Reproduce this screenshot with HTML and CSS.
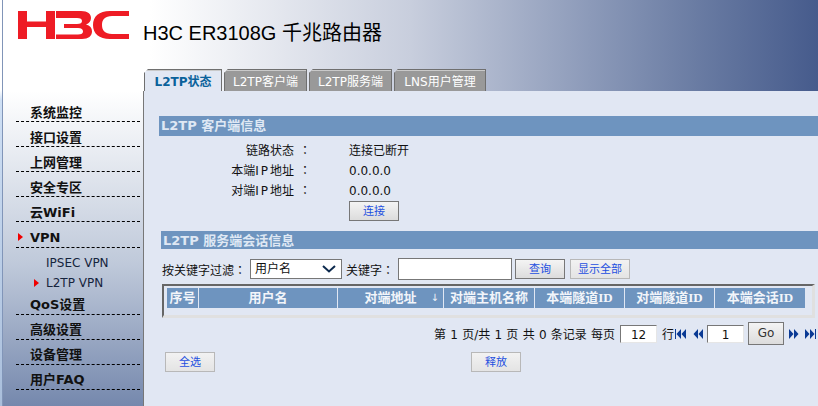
FILE: index.html
```html
<!DOCTYPE html>
<html lang="zh-CN">
<head>
<meta charset="utf-8">
<title>H3C ER3108G</title>
<link rel="stylesheet" href="styles.css">
</head>
<body>
<div class="page">
  <header class="header">
    <div class="brand">
      <svg class="logo" width="112" height="30" viewBox="0 0 112 30">
        <g fill="#ee1c25">
          <path d="M0 1h9v10.500h19V1h9v28h-9V17H9v12H0z"/>
          <path d="M38 1h25c7 0 10 3 10 7 0 3-2 5.500-5 6.500 4 1 6 3.500 6 7 0 4.500-3.500 7.500-10 7.500H38v-4.500h22c3.500 0 5-1 5-3 0-2.200-1.500-3.500-5-3.500H46v-4h13c3.500 0 5-1 5-3s-1.500-3-5-3H38z"/>
          <path d="M111 1v5H94c-7 0-10 3.500-10 9s3 9 10 9h17v5H92C81 29 75 23.500 75 15S81 1 92 1z"/>
        </g>
      </svg>
      <h1 class="title">H3C ER3108G 千兆路由器</h1>
    </div>
    <nav class="tabs">
      <a class="tab active">L2TP状态</a>
      <a class="tab">L2TP客户端</a>
      <a class="tab">L2TP服务端</a>
      <a class="tab wide">LNS用户管理</a>
    </nav>
  </header>
  <div class="body">
    <aside class="sidebar">
      <a class="item">系统监控</a>
      <a class="item">接口设置</a>
      <a class="item">上网管理</a>
      <a class="item">安全专区</a>
      <a class="item">云WiFi</a>
      <a class="item current">VPN</a>
      <div class="sub">
        <a class="subitem">IPSEC VPN</a>
        <a class="subitem current">L2TP VPN</a>
      </div>
      <a class="item after-sub">QoS设置</a>
      <a class="item">高级设置</a>
      <a class="item">设备管理</a>
      <a class="item">用户FAQ</a>
    </aside>
    <main class="main">
      <section class="client">
        <h2 class="bar">L2TP 客户端信息</h2>
        <dl class="info">
          <dt>链路状态<span class="colon" lang="zh-Hant">：</span></dt><dd>连接已断开</dd>
          <dt>本端<span class="latin">IP</span>地址<span class="colon" lang="zh-Hant">：</span></dt><dd>0.0.0.0</dd>
          <dt>对端<span class="latin">IP</span>地址<span class="colon" lang="zh-Hant">：</span></dt><dd>0.0.0.0</dd>
        </dl>
        <div class="connect"><button class="btn">连接</button></div>
      </section>
      <section class="server">
        <h2 class="bar slim">L2TP 服务端会话信息</h2>
        <div class="filter">
          <span>按关键字过滤<span class="colon" lang="zh-Hant">：</span></span>
          <span class="select">用户名
            <svg width="14" height="8" viewBox="0 0 14 8"><path d="M1 1l6 5.500L13 1" fill="none" stroke="#0d2a4e" stroke-width="2"/></svg>
          </span>
          <span>关键字<span class="colon" lang="zh-Hant">：</span></span>
          <span class="field keyword"></span>
          <button class="btn">查询</button>
          <button class="btn soft">显示全部</button>
        </div>
        <div class="table-box">
          <table class="table">
            <thead>
              <tr>
                <th class="c1">序号</th>
                <th class="c2">用户名</th>
                <th class="c3">对端地址<span class="sort">↓</span></th>
                <th class="c4">对端主机名称</th>
                <th class="c5">本端隧道ID</th>
                <th class="c5">对端隧道ID</th>
                <th class="c5">本端会话ID</th>
              </tr>
            </thead>
          </table>
        </div>
        <div class="pager">
          <span class="pager-text">第 1 页/共 1 页 共 0 条记录 每页</span>
          <span class="field small">12</span>
          <span class="rows">行</span>
          <svg class="pg first" width="12" height="10" viewBox="0 0 12 10"><path d="M0 0h1v10H0zM6 0v10L1.500 5zM11 0v10L6.500 5z" fill="#0a3a94"/></svg>
          <svg class="pg prev" width="10" height="10" viewBox="0 0 10 10"><path d="M5 0v10L.5 5zM10 0v10L5.500 5z" fill="#0a3a94"/></svg>
          <span class="field small page-no">1</span>
          <button class="btn go">Go</button>
          <svg class="pg next" width="10" height="10" viewBox="0 0 10 10"><path d="M0 0v10l4.500-5zM5 0v10l4.500-5z" fill="#0a3a94"/></svg>
          <svg class="pg last" width="12" height="10" viewBox="0 0 12 10"><path d="M0 0v10l4.500-5zM5 0v10l4.500-5zM10 0h1v10h-1z" fill="#0a3a94"/></svg>
        </div>
        <div class="actions">
          <button class="btn soft">全选</button>
          <button class="btn soft">释放</button>
        </div>
      </section>
    </main>
  </div>
</div>
</body>
</html>
```
FILE: styles.css
```css
* { box-sizing: border-box; }
html, body { margin: 0; height: 100%; overflow: hidden; }
body {
  width: 818px;
  height: 406px;
  background: linear-gradient(#ffffff 90px, #cfe0f5 100px, #a9bedb);
  font-family: "DejaVu Sans", "Noto Sans CJK SC", sans-serif;
  font-size: 12px;
  color: #111;
}
.page {
  margin-left: 2px;
  height: 406px;
  border-left: 1px solid #8195b8;
  display: flex;
  flex-direction: column;
}
.header {
  height: 91px;
  display: flex;
  flex-direction: column;
  background: linear-gradient(90deg, #fff 0, #fff 18%, #c8cedd 50%, #8c9ab9 72%, #6a7ca3 85%, #465b8c 100%);
}
.brand {
  height: 69px;
  display: flex;
  align-items: flex-start;
}
.logo { margin: 10px 0 0 15px; flex: none; }
.title {
  margin: 21px 0 0 13px;
  font: 400 20px/24px "Liberation Sans", "Noto Sans CJK SC", sans-serif;
  color: #000;
  white-space: nowrap;
}
.tabs {
  height: 22px;
  padding-left: 141px;
  display: flex;
  gap: 2px;
}
.tab {
  width: 83px;
  height: 22px;
  background: #999;
  border: 1px solid #6f6f6f;
  border-bottom: 0;
  box-shadow: inset 0 1px 0 #c9c9c9;
  clip-path: polygon(4px 0, 100% 0, 100% 100%, 0 100%, 0 4px);
  color: #fff;
  font-size: 12px;
  line-height: 24px;
  text-align: center;
  white-space: nowrap;
}
.tab.active {
  width: 78px;
  background: #e1e7f3;
  color: #0a629b;
  font-weight: 700;
}
.tab.wide { width: 92px; }
.body { flex: 1; display: flex; min-height: 0; }
.sidebar {
  width: 141px;
  border-right: 1px solid #777;
  background: linear-gradient(#ffffff 0, #bfc9da 55%, #7588ad 100%);
  padding: 6px 3px 0 13px;
  flex: none;
}
.item {
  display: block;
  height: 25.100px;
  padding: 5px 0 0 14px;
  border-bottom: 1px dashed #000;
  font: 700 13px/22px "DejaVu Sans", "Noto Sans CJK SC", sans-serif;
  color: #111;
  position: relative;
}
.item.after-sub { height: 22px; padding-top: 0; line-height: 23px; }
.after-sub ~ .item { padding-top: 4px; }
.current::before {
  content: "";
  position: absolute;
  border-left: 5px solid #f00000;
  border-top: 4.500px solid transparent;
  border-bottom: 4.500px solid transparent;
}
.item.current::before { left: 2px; top: 11px; }
.sub { padding-top: 5px; }
.subitem {
  display: block;
  height: 20px;
  padding-left: 30px;
  font-size: 12px;
  line-height: 20px;
  color: #16243d;
  position: relative;
}
.subitem.current::before { left: 18px; top: 6px; }
.main {
  flex: 1;
  min-width: 0;
  background: #e1e7f3;
  padding-top: 25px;
}
.bar {
  margin: 0;
  height: 20px;
  padding-left: 2px;
  background: #6e94bf;
  color: #dfe8f4;
  font: 700 13px/20px "DejaVu Sans", "Noto Sans CJK SC", sans-serif;
}
.bar.slim { height: 18px; line-height: 19px; padding-left: 2px; }
.client { margin-left: 15px; }
.info {
  margin: 5px 0 0;
  display: grid;
  grid-template-columns: 152px 1fr;
  grid-auto-rows: 20px;
  column-gap: 38px;
  line-height: 20px;
}
.info dt { text-align: right; white-space: nowrap; }
.info dd { margin: 0; }
.latin { letter-spacing: 2px; }
.colon { font-family: "Noto Sans CJK TC", sans-serif; line-height: 12px; }
.info .colon { padding-left: 5px; }
.connect { padding: 0 0 0 190px; height: 21px; }
.btn {
  width: 50px;
  height: 20px;
  padding: 0;
  border: 1px solid #777;
  background: linear-gradient(#f4f4f4, #dcdcdc);
  color: #1d4fe0;
  font: 400 11px/17px "DejaVu Sans", "Noto Sans CJK SC", sans-serif;
}
.btn.soft { border-color: #b8b8b8; background: linear-gradient(#f2f2f2, #e4e4e4); }
.server { margin: 9px 0 0 17px; }
.filter {
  margin-top: 9px;
  height: 22px;
  display: flex;
  align-items: center;
  gap: 4px;
  padding-left: 1px;
  white-space: nowrap;
}
.select {
  width: 92px;
  height: 20px;
  background: #fff;
  border: 1px solid #777;
  padding: 0 5px 0 4px;
  line-height: 18px;
  display: flex;
  justify-content: space-between;
  align-items: center;
  font-size: 12px;
}
.field {
  display: block;
  background: #fff;
  border: 1px solid #777;
  border-right-color: #e6e6e6;
  border-bottom-color: #e6e6e6;
  text-align: center;
  line-height: 18px;
}
.keyword { width: 114px; height: 22px; border-right-color: #777; border-bottom-color: #777; }
.filter .btn { margin-left: -1px; }
.filter .btn.soft { width: 60px; margin-left: 1px; }
.table-box {
  margin: 4px 0 0 1px;
  width: 653px;
  height: 34px;
  border: 3px solid #e0e0e0;
  border-top-color: #666;
  border-left-color: #666;
  border-left-width: 2px;
  border-top-width: 2px;
  padding: 2px 0 0 3px;
}
.table { border-collapse: separate; border-spacing: 0; table-layout: fixed; width: 637px; }
.table th {
  height: 20px;
  padding: 0;
  background: #6e94bf;
  border-right: 1px solid #e1e7f3;
  color: #f2f5fa;
  font: 700 13px/20px "Liberation Serif", "Noto Sans CJK SC", serif;
  position: relative;
  white-space: nowrap;
}
.table th:last-child { border-right: 0; }
.c1 { width: 32px; }
.c2 { width: 139px; }
.c3 { width: 106px; }
.c4 { width: 91px; }
.c5 { width: 90px; }
.sort {
  position: absolute;
  right: 4px;
  top: 0;
  font: 400 10px/20px "DejaVu Sans", sans-serif;
}
.pager {
  margin-top: 4px;
  height: 23px;
  display: flex;
  align-items: center;
  padding-left: 273px;
  white-space: nowrap;
}
.pager-text { word-spacing: .45px; }
.small { width: 37px; height: 18px; margin-left: 5px; }
.rows { margin-left: 5px; }
.pg { flex: none; }
.first { margin-left: 1px; }
.prev { margin-left: 6px; }
.page-no { margin-left: 4px; }
.btn.go { width: 36px; height: 23px; margin-left: 4px; color: #333; font-size: 12px; }
.next { margin-left: 5px; }
.last { margin-left: 6px; }
.actions { margin: 7px 0 0 4px; display: flex; gap: 256px; }
```
